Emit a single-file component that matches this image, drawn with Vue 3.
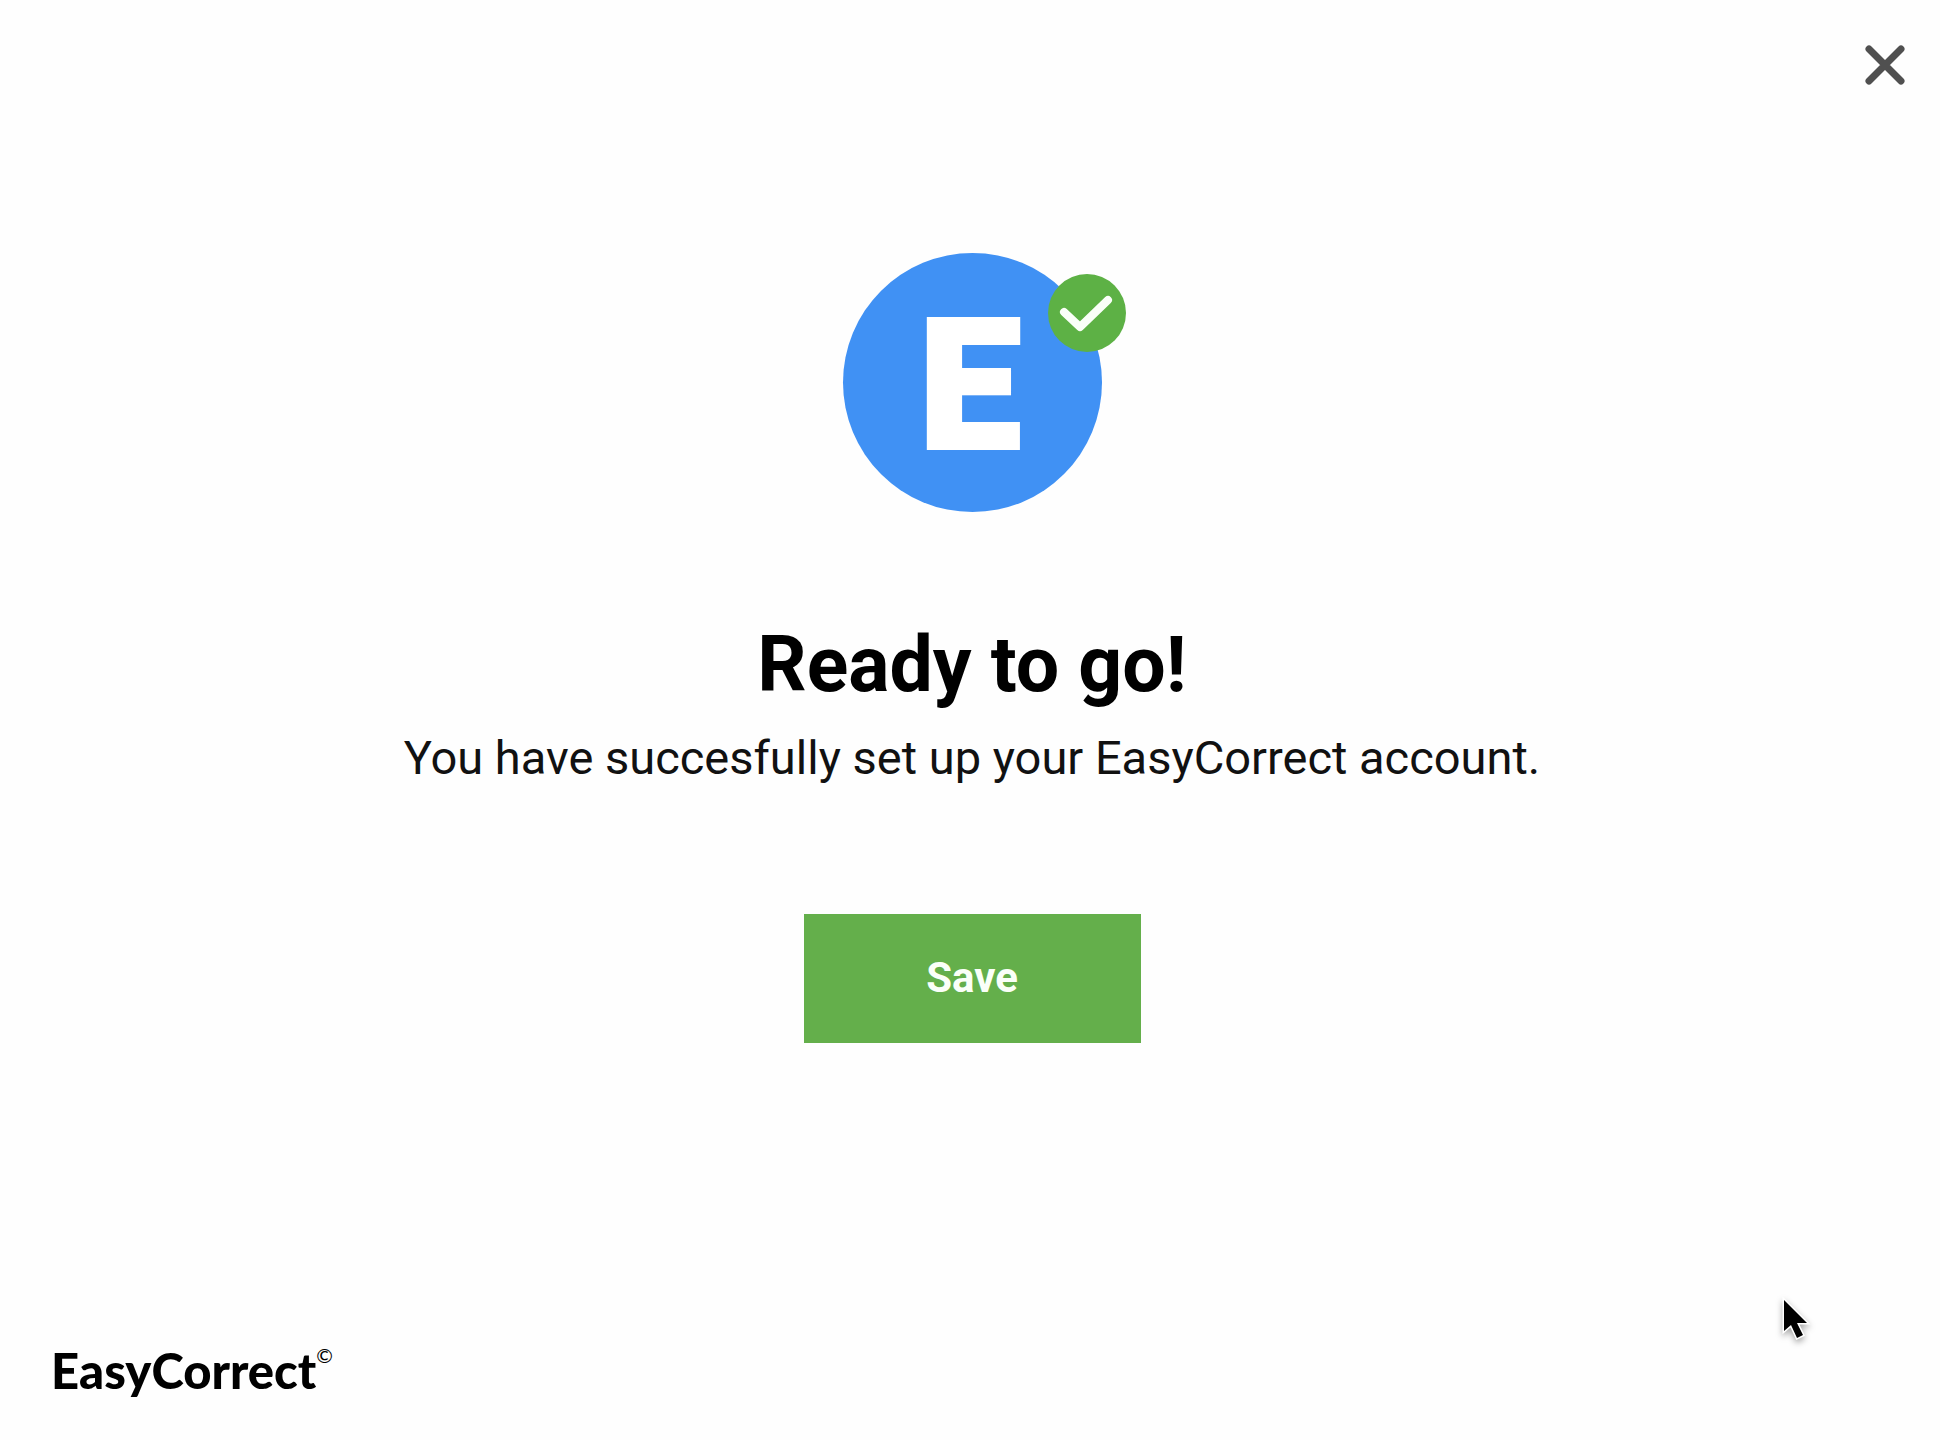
<script setup>
import { ref } from 'vue'

const saved = ref(false)
const open = ref(true)
</script>

<template>
  <div v-if="open" class="dialog" role="dialog" aria-labelledby="title">
    <header class="top">
      <button class="close" type="button" aria-label="Close" @click="open = false">
        <svg viewBox="0 0 40 40" width="40" height="40" aria-hidden="true">
          <path d="M4 4L36 36M36 4L4 36" fill="none" stroke="#505050" stroke-width="7" stroke-linecap="round" />
        </svg>
      </button>
    </header>

    <main class="content">
      <div class="logo">
        <span class="letter">E</span>
        <svg class="badge" viewBox="0 0 78 78" aria-hidden="true">
          <circle cx="39" cy="39" r="39" fill="#5db145" />
          <path d="M16 38L32 53L60 26" fill="none" stroke="#fafff8" stroke-width="8" stroke-linecap="round" stroke-linejoin="round" />
        </svg>
      </div>
      <h1 id="title">Ready to go!</h1>
      <p>You have succesfully set up your EasyCorrect account.</p>
      <button class="save" type="button" @click="saved = true">Save</button>
    </main>

    <footer class="brand">EasyCorrect<sup>©</sup></footer>

    <svg class="cursor" viewBox="0 0 36 48" aria-hidden="true">
      <path d="M5 2V33L12 27L18 40L24 37L18 25H28Z" fill="#000" stroke="#fff" stroke-width="3" paint-order="stroke" />
    </svg>
  </div>
</template>

<style>
body {
  background: #fefefe;
}
</style>

<style scoped>
.dialog {
  position: relative;
  display: flex;
  flex-direction: column;
  box-sizing: border-box;
  min-height: 100vh;
  background: #fefefe;
  color: #000;
  font-family: Roboto, "Liberation Sans", sans-serif;
}

button {
  border: 0;
  padding: 0;
  font-family: inherit;
  cursor: pointer;
}

.top {
  display: flex;
  justify-content: flex-end;
  padding: 45px 35px 0;
}

.close {
  display: flex;
  background: none;
}

.close svg {
  overflow: visible;
}

.content {
  display: flex;
  flex: 1;
  flex-direction: column;
  align-items: center;
  padding: 168px 0 40px 4px;
}

.logo {
  position: relative;
  display: flex;
  align-items: center;
  justify-content: center;
  width: 259px;
  height: 259px;
  border-radius: 50%;
  background: #4091f4;
}

.letter {
  padding: 6px 4px 0 0;
  color: #fff;
  font-size: 182px;
  font-weight: 900;
  line-height: 1;
  -webkit-text-stroke: 4px #fff;
}

.badge {
  position: absolute;
  top: 21px;
  right: -24px;
  width: 78px;
  height: 78px;
}

h1 {
  margin: 105px 0 0;
  font-size: 77px;
  font-weight: 700;
  line-height: 96px;
}

p {
  margin: 15px 0 0;
  color: #111;
  font-size: 47px;
  line-height: 60px;
}

.save {
  width: 337px;
  height: 129px;
  margin-top: 126px;
  padding-bottom: 2px;
  background: #64af4b;
  color: #fafff8;
  font-size: 42px;
  font-weight: 700;
}

.brand {
  padding: 0 51px 38px;
  font: 900 49px/64px Lato, sans-serif;
}

.brand sup {
  font-size: 20px;
  font-weight: 400;
  line-height: 0;
  vertical-align: 26px;
}

.cursor {
  position: absolute;
  right: 125px;
  bottom: 94px;
  width: 36px;
  height: 48px;
  overflow: visible;
  filter: drop-shadow(0 3px 3px rgba(0, 0, 0, 0.35));
  pointer-events: none;
}
</style>
